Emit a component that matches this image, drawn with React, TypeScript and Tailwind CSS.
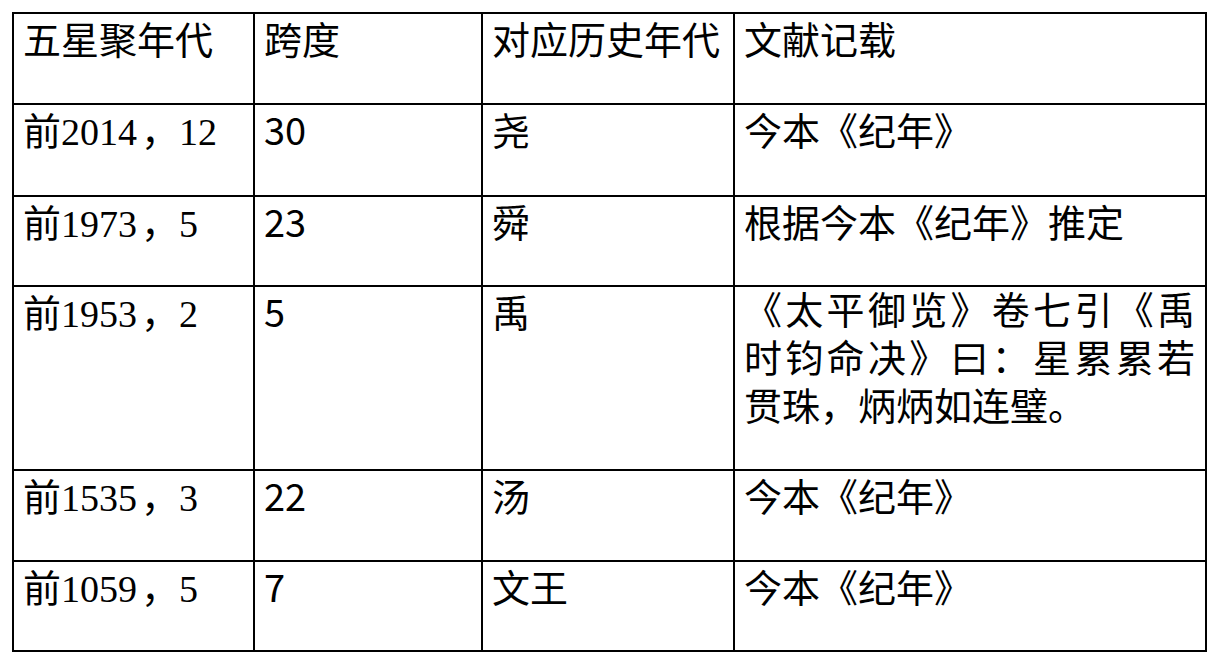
const CJK = "font-['Noto_Sans_CJK_SC',sans-serif]";
const SERIF = "font-['Liberation_Serif','Noto_Sans_CJK_SC',serif]";

interface Row {
  year: string;
  count: string;
  span: string;
  era: string;
  source: string;
  height: string;
}

const rows: Row[] = [
  { year: "2014", count: "12", span: "30", era: "尧", source: "今本《纪年》", height: "h-[92px]" },
  { year: "1973", count: "5", span: "23", era: "舜", source: "根据今本《纪年》推定", height: "h-[90px]" },
  { year: "1953", count: "2", span: "5", era: "禹", source: "", height: "h-[184px]" },
  { year: "1535", count: "3", span: "22", era: "汤", source: "今本《纪年》", height: "h-[91px]" },
  { year: "1059", count: "5", span: "7", era: "文王", source: "今本《纪年》", height: "h-[90px]" },
];

const cell = "border-r-2 border-b-2 border-black pl-[9px] pr-[10px] leading-[48px] text-[38px] text-black overflow-hidden";

function QuoteCell() {
  // 这一格是两端对齐的，前两行撑满，末行左齐
  return (
    <div className={`${cell} ${CJK} h-[184px] pt-0`}>
      <div className="-mt-[3px] [text-align-last:justify] text-justify whitespace-nowrap">《太平御览》卷七引《禹</div>
      <div className="[text-align-last:justify] text-justify whitespace-nowrap">时钧命决》曰：星累累若</div>
      <div className="whitespace-nowrap">贯珠，炳炳如连璧。</div>
    </div>
  );
}

export default function App() {
  return (
    <div className="w-[1217px] h-[663px] bg-white pt-[12px] pl-[12px]">
      <div className="w-[1195px] border-l-2 border-t-2 border-black grid grid-cols-[241px_228px_252px_472px]">
        {/* 表头 */}
        <div className={`${cell} ${CJK} h-[91px]`}>五星聚年代</div>
        <div className={`${cell} ${CJK} h-[91px]`}>跨度</div>
        <div className={`${cell} ${CJK} h-[91px]`}>对应历史年代</div>
        <div className={`${cell} ${CJK} h-[91px]`}>文献记载</div>

        {rows.map((r) => (
          <div key={r.year} className="contents">
            <div className={`${cell} ${CJK} ${r.height} whitespace-nowrap`}>
              前<span className={SERIF}>{r.year}</span>
              <span className="ml-[4px]">，</span>
              <span className={SERIF}>{r.count}</span>
            </div>
            <div className={`${cell} ${CJK} ${r.height}`}>{r.span}</div>
            <div className={`${cell} ${CJK} ${r.height}`}>{r.era}</div>
            {r.source ? (
              <div className={`${cell} ${CJK} ${r.height}`}>{r.source}</div>
            ) : (
              <QuoteCell />
            )}
          </div>
        ))}
      </div>
    </div>
  );
}
